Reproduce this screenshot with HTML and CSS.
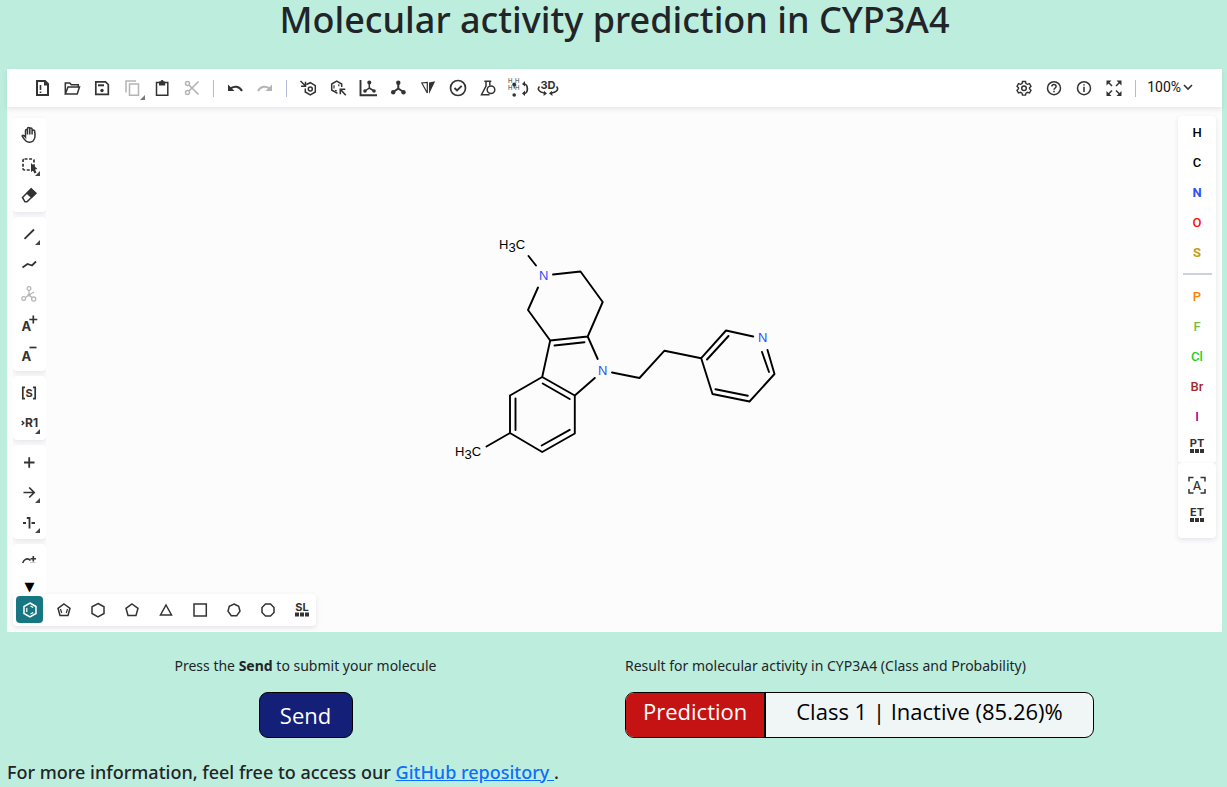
FILE: index.html
```html
<!DOCTYPE html>
<html lang="en">
<head>
<meta charset="utf-8">
<meta name="viewport" content="width=device-width, initial-scale=1">
<title>Molecular activity prediction in CYP3A4</title>
<link rel="stylesheet" href="styles.css">
</head>
<body>
<h1 class="title">Molecular activity prediction in CYP3A4</h1>

<main>
<section class="editor" aria-label="Molecule editor">
  <div class="topbar">
    <button class="tool" aria-label="New"><svg class="icon" viewBox="0 0 20 20"><path d="M5 3h8l3 3v11H5z" stroke-width="2"/><path d="M8.500 7v5M8.500 13.500v1.500" stroke-width="1.600"/><path class="fill" d="M12 3l4.500 4.500H12z"/></svg></button>
    <button class="tool" aria-label="Open"><svg class="icon" viewBox="0 0 20 20"><path d="M3.300 16V5h4.500l1.500 1.700h7V9M3.300 16L6 9h11.500l-2.300 7z"/></svg></button>
    <button class="tool" aria-label="Save"><svg class="icon" viewBox="0 0 20 20"><path d="M3.800 3.800h9.700l2.800 2.700v9.800H3.800z" stroke-width="1.700"/><path d="M6 7.300h6" stroke-width="2"/><circle class="fill" cx="10" cy="12.500" r="1.700"/></svg></button>
    <button class="tool more off" aria-label="Copy"><svg class="icon" viewBox="0 0 20 20"><path d="M7.500 6h9v11.300h-9zM4 14.500V3h10"/></svg></button>
    <button class="tool" aria-label="Paste"><svg class="icon" viewBox="0 0 20 20"><path d="M4.500 4.500h11.300v12.700H4.500z"/><path class="fill" d="M7 3.500h1.500c.5-2 2.700-2 3.200 0h1.500v4H7z"/></svg></button>
    <button class="tool off" aria-label="Cut"><svg class="icon" viewBox="0 0 20 20"><circle cx="5.500" cy="5.500" r="2"/><circle cx="5.500" cy="14.500" r="2"/><path d="M7 7l9.500 9.500M7 13l9.500-9.500" stroke-width="1.700"/></svg></button>
    <span class="divider"></span>
    <button class="tool" aria-label="Undo"><svg class="icon" viewBox="0 0 20 20"><path d="M5 11c3.500-3.500 9.500-3 12 2" stroke-width="2"/><path class="fill" d="M3 6.500V13h6.500z"/></svg></button>
    <button class="tool off" aria-label="Redo"><svg class="icon" viewBox="0 0 20 20"><path d="M15 11c-3.500-3.500-9.500-3-12 2" stroke-width="2"/><path class="fill" d="M17 6.500V13h-6.500z"/></svg></button>
    <span class="divider"></span>
    <button class="tool" aria-label="Aromatize"><svg class="icon" viewBox="0 0 20 20"><path d="M8.300 6.500l4-1.800 5 2.900v6.400l-5 2.900-5-2.900v-3.500"/><circle cx="12.300" cy="11" r="2"/><path d="M2.500 3l4.800 4.800M7.500 3.800v4.400H3"/></svg></button>
    <button class="tool" aria-label="Clean up"><svg class="icon" viewBox="0 0 20 20"><path d="M9.500 14.800L8.700 15l-5-3V6l5-3 5 3v3"/><path d="M6 10.500V7.300M10.800 6.300v2M7 12.300l2 .7" stroke-width="1.200"/><path d="M12.300 11.300l5.500 6M12.300 16.300v-5h5" stroke-width="1.600"/></svg></button>
    <button class="tool" aria-label="Layout"><svg class="icon" viewBox="0 0 20 20"><path d="M2.500 2v15.300h16.500" stroke-width="1.900"/><path d="M11.300 5v5l-4.500 3M11.300 10l4.700 3"/><g class="fill"><circle cx="11.300" cy="4.500" r="2"/><circle cx="7" cy="13" r="1.800"/><circle cx="16" cy="13" r="1.800"/></g></svg></button>
    <button class="tool" aria-label="Molecule"><svg class="icon" viewBox="0 0 20 20"><path d="M10.300 5v5.500l-5 3.500M10.300 10.500l5.200 3.500" stroke-width="2"/><g class="fill"><circle cx="10.300" cy="4.800" r="2.200"/><circle cx="5.200" cy="14.300" r="2.200"/><circle cx="15.500" cy="14.300" r="2.200"/></g></svg></button>
    <button class="tool" aria-label="Stereochemistry"><svg class="icon" viewBox="0 0 20 20"><path d="M3.800 5l5.500 10V4.500z" stroke-width="1.200"/><path class="fill" d="M11 4.500l6.200-1.200-6.200 12.700z"/></svg></button>
    <button class="tool" aria-label="Check"><svg class="icon" viewBox="0 0 20 20"><circle cx="10" cy="10" r="7.500" stroke-width="1.700"/><path d="M6.500 10l2.500 2.500 4.700-4.700" stroke-width="1.900"/></svg></button>
    <button class="tool" aria-label="Calculate"><svg class="icon" viewBox="0 0 20 20"><path d="M6.300 3.300h7M8 3.500V8l-4.500 8.700h8M11.800 3.500v4"/><circle cx="13" cy="11.700" r="3.800"/></svg></button>
    <button class="tool" aria-label="Explicit hydrogens"><svg class="icon wide" viewBox="0 0 22 20"><g class="glyph h"><text x="1" y="5">H</text><text x="8" y="5">H</text><text x="1" y="12">H</text><text x="8" y="12">H</text></g><g class="fill"><circle cx="7.200" cy="6.500" r="1.900"/><circle cx="7.200" cy="17" r="1.800"/></g><path d="M7.200 6.500v4" stroke-width="1"/><path d="M17 6c4.500-.5 4.500 10 0 9.500" stroke-width="1.700"/><path class="fill" d="M15 6l3-3v5.500zM15 15.500l3-3v5.500z"/></svg></button>
    <button class="tool" aria-label="3D viewer"><svg class="icon wide" viewBox="0 0 22 20"><text class="glyph" x="11" y="11" font-size="11" text-anchor="middle">3D</text><path d="M2.500 8.500C0 11 1.500 14 8 15.200M19.500 8.500c2.500 2.500 1 6-6.500 6.700"/><path class="fill" d="M7 12.700l3 2.700-3.500 2.500zM15 12.700l-3 2.700 3.500 2.500z"/></svg></button>
    <span class="spacer"></span>
    <button class="tool" aria-label="Settings"><svg class="icon" viewBox="0 0 20 20"><path d="M8.500 3.500h3l.5 2 1.500.8 2-.6 1.500 2.600-1.500 1.500v1l1.500 1.500-1.500 2.600-2-.6-1.500.8-.5 2h-3l-.5-2-1.500-.8-2 .6L3 12.300l1.500-1.500v-1L3 8.300l1.500-2.600 2 .6L8 5.500z" stroke-width="1.400"/><circle cx="10" cy="10.300" r="2.300"/></svg></button>
    <button class="tool" aria-label="Help"><svg class="icon" viewBox="0 0 20 20"><circle cx="10" cy="10.200" r="6.500"/><path d="M7.900 8.500c0-2.700 4.200-2.700 4.200 0 0 1.500-2.100 1.500-2.100 3.300M10 12.800v1.400"/></svg></button>
    <button class="tool" aria-label="About"><svg class="icon" viewBox="0 0 20 20"><circle cx="10" cy="10.200" r="6.500"/><path d="M10 6.300v1.300M10 8.800V14"/></svg></button>
    <button class="tool" aria-label="Full screen"><svg class="icon" viewBox="0 0 20 20"><path d="M4 4l4 4M16 4l-4 4M4 16.500l4-4M16 16.500l-4-4"/><path class="fill" d="M2.500 2.500h5l-5 5zM17.500 2.500v5l-5-5zM2.500 18v-5l5 5zM17.500 18h-5l5-5z"/></svg></button>
    <span class="divider"></span>
    <button class="zoom">100%<svg class="chevron" viewBox="0 0 10 8"><path d="M1 2l4 4 4-4"/></svg></button>
  </div>

  <div class="workspace">
    <div class="side">
      <div class="stack">
        <div class="group">
          <button class="tool" aria-label="Hand"><svg class="icon" viewBox="0 0 20 20"><path d="M6.500 12V5.500c0-1.500 2-1.500 2 0V9.500 3.500c0-1.500 2.300-1.500 2.300 0V9.500 4c0-1.500 2.300-1.500 2.300 0v5.500V6c0-1.500 2.500-1.500 2.500 0 .8 4 .8 7.500-1.500 10-2 1.700-5.500 1.500-7.200 0C5.200 14.500 4.200 13 3.200 11.200c-.4-1.500 1.500-1.500 3.300.8z"/></svg></button>
          <button class="tool more" aria-label="Select"><svg class="icon" viewBox="0 0 20 20"><rect x="4" y="4" width="11" height="11" rx="1.500" stroke-dasharray="3 1.600" stroke-width="1.700"/><path d="M12 8v9l2-1.500 1.500 3 2-1-1.500-3 2.500-.5z" class="fill"/></svg></button>
          <button class="tool" aria-label="Erase"><svg class="icon" viewBox="0 0 20 20"><path d="M3.500 12.500l8.700-8.700 4.700 4.400L8 16.800H6z"/><path class="fill" d="M12.200 3.300l5.300 5-5 5L7 8.300z"/></svg></button>
        </div>
        <div class="group">
          <button class="tool more" aria-label="Single bond"><svg class="icon" viewBox="0 0 20 20"><path d="M5.500 14.800L15 5.500" stroke-width="1.800"/></svg></button>
          <button class="tool" aria-label="Chain"><svg class="icon" viewBox="0 0 20 20"><path d="M3.500 13.500l5-3.500 4.500 1.500 4-4" stroke-width="1.800"/></svg></button>
          <button class="tool off" aria-label="Stereo"><svg class="icon" viewBox="0 0 20 20"><g stroke-width="1.200"><circle cx="10" cy="4.500" r="1.900"/><circle cx="4.700" cy="14.500" r="1.900"/><circle cx="14.700" cy="15" r="2.100"/><path d="M10 6.500V11l-3.700 2.500M10 11l3.200 2.700M10 11l5-3"/></g><circle class="fill" cx="10" cy="11" r="1.500"/></svg></button>
          <button class="tool" aria-label="Charge plus"><svg class="icon" viewBox="0 0 20 20"><text class="glyph" x="2.500" y="17" font-size="13">A</text><path d="M10.300 5.500h8M14.300 1.500v8" stroke-width="1.700"/></svg></button>
          <button class="tool" aria-label="Charge minus"><svg class="icon" viewBox="0 0 20 20"><text class="glyph" x="2.500" y="17" font-size="13">A</text><path d="M10.500 3.500h7" stroke-width="1.700"/></svg></button>
        </div>
        <div class="group">
          <button class="tool" aria-label="S-group"><svg class="icon" viewBox="0 0 20 20"><path d="M6 4.300H3.800v11.400H6M14 4.300h2.200v11.400H14" stroke-width="1.700"/><text class="glyph" x="10" y="14" font-size="11" text-anchor="middle">S</text></svg></button>
          <button class="tool more" aria-label="R-group"><svg class="icon" viewBox="0 0 20 20"><path d="M2.800 8l2 2-2 2"/><text class="glyph" x="6" y="14" font-size="12">R1</text></svg></button>
        </div>
        <div class="group">
          <button class="tool" aria-label="Reaction plus"><svg class="icon" viewBox="0 0 20 20"><path d="M5 10.500h10.500M10.200 5.300v10.400" stroke-width="1.800"/></svg></button>
          <button class="tool more" aria-label="Reaction arrow"><svg class="icon" viewBox="0 0 20 20"><path d="M4.500 10.500H15M10.200 5.500l5 5-5 5" stroke-width="1.700"/></svg></button>
          <button class="tool more" aria-label="Mapping"><svg class="icon" viewBox="0 0 20 20"><path d="M4 11h3M12.500 11H16M7.800 6h2.700v10.500" stroke-width="1.800"/></svg></button>
        </div>
        <div class="group">
          <button class="tool" aria-label="Arrow plus"><svg class="icon" viewBox="0 0 20 20"><path d="M3.500 13c1-5 5-6.500 8-3.500M11 12.500h5.500M14.300 5v5.500M11.500 7.700H17" stroke-width="1.600"/></svg></button>
        </div>
      </div>
      <button class="scroll" aria-label="Scroll down">▼</button>
    </div>

    <div class="canvas">
      <svg class="molecule" viewBox="0 0 343 250" role="img" aria-label="Structure of the molecule">
        <path d="M88.500 36l7.500 9.500M113 54.500l27.500-3 22.200 30.500-15 34.500-37.500 4L88 90l10-22.500M114.500 125.500l30-3.300M147.700 116.500l10 22.500M110.200 120.500l-8 36.500 32.600 18.500 20-17.500M102.200 157L70 175.500V213l32.200 19 32.600-18.500v-38M102.700 163.500l27 15.500M75.500 178.500V210M101.700 225.500l28-15.700M70 213l-23.500 13.500M172 152.500l27.500 5.500 25-27.300 36.700 7.500L286 110.500l27.200 6M267 139.500l21.500-23.500M261.200 138.200l11.300 35.800 37 7.500 25-27.500-7-24M329 152l-7-20M275.500 169.300l32.300 6.500"/>
        <g class="atoms">
          <text x="59" y="29">H<tspan dy="3">3</tspan><tspan dy="-3">C</tspan></text>
          <text x="15" y="236">H<tspan dy="3">3</tspan><tspan dy="-3">C</tspan></text>
          <g class="n"><text x="99" y="60">N</text><text x="158" y="155">N</text><text x="318" y="122">N</text></g>
        </g>
      </svg>
    </div>

    <div class="elements">
      <div class="group">
        <button class="atom">H</button>
        <button class="atom">C</button>
        <button class="atom c-n">N</button>
        <button class="atom c-o">O</button>
        <button class="atom c-s">S</button>
        <hr class="rule">
        <button class="atom c-p">P</button>
        <button class="atom c-f">F</button>
        <button class="atom c-cl">Cl</button>
        <button class="atom c-br">Br</button>
        <button class="atom c-i">I</button>
        <button class="tool" aria-label="Periodic table"><svg class="icon" viewBox="0 0 20 20"><text class="glyph" x="10" y="11" font-size="11" text-anchor="middle">PT</text><path class="dots" d="M3 15h14.500"/></svg></button>
      </div>
      <div class="group">
        <button class="tool" aria-label="Any atom"><svg class="icon" viewBox="0 0 20 20"><path d="M6.500 2.500H2v4M13.500 2.500H18v4M6.500 18H2v-4M13.500 18H18v-4"/><text class="glyph plain" x="10" y="14.500" font-size="12" text-anchor="middle">A</text></svg></button>
        <button class="tool" aria-label="Extended table"><svg class="icon" viewBox="0 0 20 20"><text class="glyph" x="10" y="11" font-size="11" text-anchor="middle">ET</text><path class="dots" d="M3 15h14.500"/></svg></button>
      </div>
    </div>

    <div class="templates">
      <button class="ring active" aria-label="Benzene"><svg class="icon" viewBox="0 0 20 20"><path d="M10 3l6 3.500v7L10 17l-6-3.500v-7z"/><path d="M6.800 8v4M10.500 6l2.700 1.600M13.200 12.400L10.500 14" stroke-width="1.200"/></svg></button>
      <button class="ring" aria-label="Cyclopentadiene"><svg class="icon" viewBox="0 0 20 20"><path d="M10 4l6 4.300-2 7.200H6L4 8.300z"/><path d="M6.500 9l1.200 4M13.500 9l-1.200 4" stroke-width="1.200"/></svg></button>
      <button class="ring" aria-label="Cyclohexane"><svg class="icon" viewBox="0 0 20 20"><path d="M10 3.500l6 3.300v6.700l-6 3.300-6-3.300V6.800z"/></svg></button>
      <button class="ring" aria-label="Cyclopentane"><svg class="icon" viewBox="0 0 20 20"><path d="M10 4l6 4.300-2 7.200H6L4 8.300z"/></svg></button>
      <button class="ring" aria-label="Cyclopropane"><svg class="icon" viewBox="0 0 20 20"><path d="M10 5l5.500 10h-11z"/></svg></button>
      <button class="ring" aria-label="Cyclobutane"><svg class="icon" viewBox="0 0 20 20"><path d="M4 4h12.300v12H4z"/></svg></button>
      <button class="ring" aria-label="Cycloheptane"><svg class="icon" viewBox="0 0 20 20"><path d="M10 4l4.700 2.200 1.300 5-3.300 4.500H7.300L4 11.200l1.300-5z"/></svg></button>
      <button class="ring" aria-label="Cyclooctane"><svg class="icon" viewBox="0 0 20 20"><path d="M7.500 4h5L16 7.500v5L12.500 16h-5L4 12.500v-5z"/></svg></button>
      <button class="ring" aria-label="Structure library"><svg class="icon" viewBox="0 0 20 20"><text class="glyph" x="10" y="10.500" font-size="11" text-anchor="middle">SL</text><path class="dots" d="M3 14.500h14.500"/></svg></button>
    </div>
  </div>
</section>

<div class="actions">
  <div class="submit">
    <p class="note">Press the <strong>Send</strong> to submit your molecule</p>
    <button class="send">Send</button>
  </div>
  <div class="result">
    <p class="note">Result for molecular activity in CYP3A4 (Class and Probability)</p>
    <div class="outcome">
      <span class="label">Prediction</span>
      <output class="value">Class 1 | Inactive (85.26)%</output>
    </div>
  </div>
</div>
</main>

<p class="more-info">For more information, feel free to access our <a href="#">GitHub repository </a>.</p>
</body>
</html>
```
FILE: styles.css
```css
* { box-sizing: border-box; }

body {
  margin: 0;
  padding: 0 5px 0 7px;
  background: #bdeedd;
  color: #212529;
  font-family: "Open Sans", "Noto Sans", sans-serif;
}

button {
  border: 0;
  padding: 0;
  background: none;
  color: inherit;
  font: inherit;
  cursor: pointer;
}

.title {
  margin: 0;
  height: 69px;
  font-family: "Noto Sans", sans-serif;
  font-size: 36px;
  line-height: 40px;
  font-weight: 500;
  text-align: center;
}

/* Editor */
.editor {
  display: flex;
  flex-direction: column;
  height: calc(100vh - 224px);
  min-height: 480px;
  background: #fcfcfc;
  color: #333;
}

.topbar {
  display: flex;
  align-items: center;
  height: 38px;
  padding: 0 29px 0 20px;
  background: #fff;
  box-shadow: 0 2px 5px rgba(103, 104, 132, 0.15);
}

.tool {
  position: relative;
  display: flex;
  align-items: center;
  justify-content: center;
  width: 30px;
  height: 30px;
}

.tool.off { color: #b4b4b4; }

.tool.more::after {
  content: "";
  position: absolute;
  right: 4px;
  bottom: 4px;
  border-style: solid;
  border-width: 0 0 5px 5px;
  border-color: transparent transparent #444;
}

.topbar .tool.more::after {
  right: 2px;
  bottom: 3px;
  border-bottom-color: #777;
}

.icon {
  width: 20px;
  height: 20px;
  fill: none;
  stroke: currentColor;
  stroke-width: 1.500;
  overflow: visible;
}

.icon.wide { width: 22px; }
.icon .fill { fill: currentColor; stroke: none; }
.icon .dots { stroke-width: 4; stroke-dasharray: 4 1; }

.glyph {
  fill: currentColor;
  stroke: none;
  font-family: Inter, sans-serif;
  font-weight: 700;
}

.glyph.plain { font-weight: 500; }
.glyph.h { font-size: 6px; font-weight: 400; }

.divider {
  width: 1px;
  height: 17px;
  margin: 0 6px;
  background: #b4b9d6;
}

.spacer { flex: 1; }

.zoom {
  display: flex;
  align-items: center;
  gap: 2px;
  padding: 0 0 3px 5px;
  color: #111;
  font-family: Roboto, sans-serif;
  font-size: 14px;
}

.chevron {
  width: 10px;
  height: 8px;
  fill: none;
  stroke: #333;
  stroke-width: 1.600;
}

.workspace {
  flex: 1;
  display: grid;
  grid-template-columns: auto 1fr auto;
  grid-template-rows: minmax(0, 1fr) auto;
  min-height: 0;
  padding: 0 6px 6px;
}

.side {
  display: flex;
  flex-direction: column;
  min-height: 0;
}

.stack {
  display: flex;
  flex-direction: column;
  gap: 5px;
  flex: 1;
  min-height: 0;
  padding-top: 11px;
  overflow: hidden;
}

.group {
  flex: none;
  padding: 2px 1px;
  border-radius: 4px;
  background: #fff;
  box-shadow: 0 2px 5px rgba(103, 104, 132, 0.15);
}

.side .group { width: 33px; }

.scroll {
  height: 31px;
  padding-top: 16px;
  background: #fff;
  color: #000;
  font-family: "DejaVu Sans", sans-serif;
  font-size: 13px;
  line-height: 15px;
}

.canvas {
  display: flex;
  align-items: center;
  justify-content: center;
  min-width: 0;
  padding: 0 2px 12px 0;
}

.molecule {
  width: 343px;
  height: 250px;
  fill: none;
  stroke: #000;
  stroke-width: 1.900;
  stroke-linecap: round;
  stroke-linejoin: round;
}

.atoms {
  fill: #000;
  stroke: none;
  font-family: "Liberation Sans", Arial, sans-serif;
  font-size: 13px;
}

.atoms .n { fill: #304ff7; }

.elements { padding-top: 9px; }

.elements .group {
  display: flex;
  flex-direction: column;
  align-items: center;
  width: 38px;
  padding: 1px 4px 2px;
}

.elements .group + .group { padding: 7px 4px 8px; }

.atom {
  width: 30px;
  height: 30px;
  color: #000;
  font-family: Roboto, sans-serif;
  font-size: 13px;
  font-weight: 500;
}

.c-n { color: #304ff7; font-weight: 700; }
.c-o { color: #ff0d0d; }
.c-s { color: #c99a19; font-weight: 700; }
.c-p { color: #ff8000; }
.c-f { color: #78bc42; }
.c-cl { color: #1fd01f; }
.c-br { color: #a62929; }
.c-i { color: #940094; }

.rule {
  width: 29px;
  height: 2px;
  margin: 6px 0;
  border: 0;
  background: #cad3dd;
}

.templates {
  grid-column: 1 / -1;
  justify-self: start;
  display: flex;
  gap: 7px;
  padding: 2px 1px 3px 3px;
  border-radius: 4px;
  background: #fff;
  box-shadow: 0 2px 5px rgba(103, 104, 132, 0.15);
}

.ring {
  display: flex;
  align-items: center;
  justify-content: center;
  width: 27px;
  height: 27px;
  border-radius: 4px;
}

.ring.active {
  background: #167782;
  color: #fff;
}

/* Submission and result */
.actions {
  display: grid;
  grid-template-columns: 1fr 1fr;
  gap: 21px;
  padding-top: 22px;
}

.submit { text-align: center; }

.note {
  margin: 0 0 15px;
  font-family: "Noto Sans", sans-serif;
  font-size: 14px;
  line-height: 23px;
}

.send {
  width: 94px;
  height: 46px;
  border: 1px solid #000;
  border-radius: 9px;
  background: #141f78;
  color: #fff;
  font-size: 22px;
}

.outcome {
  display: inline-flex;
  height: 46px;
  border: 1px solid #000;
  border-radius: 9px;
  background: #f0f5f5;
  overflow: hidden;
  font-size: 22px;
  line-height: 36px;
}

.label {
  padding: 0 17px;
  border-right: 2px solid #000;
  background: #c51313;
  color: #fff;
}

.value {
  padding: 0 30px;
  color: #000;
}

.more-info {
  margin: 22px 0 0;
  font-family: "Noto Sans", sans-serif;
  font-size: 18px;
  line-height: 24px;
  font-weight: 500;
}

.more-info a { color: #0d6efd; }
```
